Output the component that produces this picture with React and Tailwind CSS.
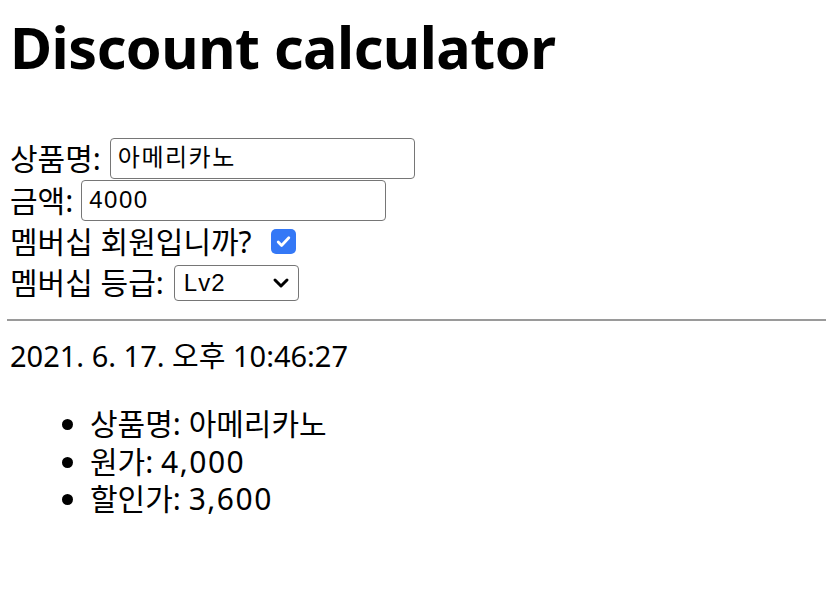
export default function App() {
  const ko = { fontFamily: '"Noto Sans", "Noto Sans CJK KR", sans-serif' };
  const inp = { fontFamily: '"Liberation Sans", "Noto Sans CJK KR", sans-serif' };
  return (
    <div className="bg-white text-black min-h-[594px] text-[30px]" style={ko}>
      <div className="px-[10px] pt-[11px]">
        <h1 className="text-[57.5px] font-bold leading-[72px] tracking-[-0.5px]">Discount calculator</h1>
        <div className="mt-[54px] flex flex-col">
          <div className="flex items-center h-[42px]">
            <span>상품명:</span>
            <div className="ml-[9px] w-[305px] h-[41px] border border-[#767676] rounded-[4px] flex items-center px-[7px] text-[24px] tracking-[1.5px]" style={inp}>아메리카노</div>
          </div>
          <div className="flex items-center h-[42px]">
            <span>금액:</span>
            <div className="ml-[8px] w-[305px] h-[41px] border border-[#767676] rounded-[4px] flex items-center px-[7px] text-[24px] tracking-[1.5px]" style={inp}>4000</div>
          </div>
          <div className="flex items-center h-[41px]">
            <span>멤버십 회원입니까?</span>
            <span className="ml-[19px] w-[25px] h-[25px] rounded-[5px] bg-[#3478f6] flex items-center justify-center">
              <svg width="17" height="17" viewBox="0 0 16 16" fill="none"><path d="M3 8.5l3.2 3.2L13 4.5" stroke="white" strokeWidth="2.6" strokeLinecap="round" strokeLinejoin="round" /></svg>
            </span>
          </div>
          <div className="flex items-center h-[41px]">
            <span>멤버십 등급:</span>
            <div className="ml-[10px] w-[125px] h-[36px] border border-[#767676] rounded-[4px] flex items-center justify-between pl-[9px] pr-[8px] text-[24px] tracking-[1px]" style={inp}>
              <span>Lv2</span>
              <svg width="18" height="12" viewBox="0 0 18 12" fill="none"><path d="M3 3l6 6 6-6" stroke="black" strokeWidth="3" strokeLinecap="round" strokeLinejoin="round" /></svg>
            </div>
          </div>
        </div>
      </div>
      <hr className="ml-[7px] mt-[16px] border-0 border-t-2 border-[#9a9a9a]" />
      <div className="px-[10px] mt-[16px]">
        <div className="leading-[37px] text-[29px]">2021. 6. 17. 오후 10:46:27</div>
        <ul className="list-disc pl-[80px] mt-[31px] leading-[37.5px]">
          <li>상품명: 아메리카노</li>
          <li>원가: <span className="tracking-[1.5px]">4,000</span></li>
          <li>할인가: <span className="tracking-[1.5px]">3,600</span></li>
        </ul>
      </div>
    </div>
  );
}
